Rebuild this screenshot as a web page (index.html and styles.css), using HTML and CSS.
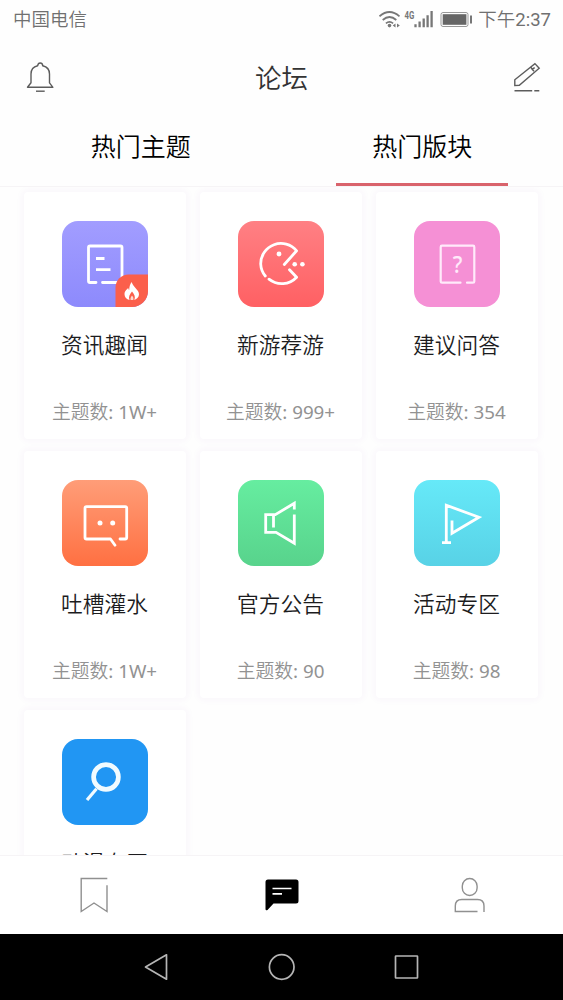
FILE: index.html
```html
<!DOCTYPE html>
<html lang="zh-CN">
<head>
    <meta charset="UTF-8">
    <meta name="viewport" content="width=device-width, initial-scale=1.0">
    <title>论坛</title>
    <link rel="stylesheet" href="styles.css">
</head>
<body>
    <div class="screen">
        <!-- Status bar -->
        <div class="status-bar">
            <span class="carrier">中国电信</span>
            <div class="status-right">
                <svg class="status-icons" width="94" height="20" viewBox="0 0 94 20">
                    <g fill="none" stroke="#777" stroke-width="1.7">
                        <path d="M0.500 6.300Q10.500 -2.300 20.500 6.300"/>
                        <path d="M3.700 10Q10.500 4 17.300 10"/>
                        <path d="M6.900 13.400Q10.500 10.400 14.100 13.400"/>
                    </g>
                    <circle cx="10.500" cy="15.600" r="1.800" fill="#777"/>
                    <path d="M16.500 13.400v4.200l-2.800-2.100zM18 13.400v4.200l2.800-2.100z" fill="#777"/>
                    <text class="net" x="25.500" y="8.500" textLength="9.800" lengthAdjust="spacingAndGlyphs">4G</text>
                    <path d="M36.500 14.200v3M40.600 11.600v5.600M44.700 8.600v8.600M48.600 5.300v11.900M52.600 1v16.200" stroke="#777" stroke-width="2.300"/>
                    <rect x="62" y="2.500" width="27" height="14" rx="2" fill="none" stroke="#999"/>
                    <rect x="63.700" y="4.200" width="23.700" height="10.600" fill="#666"/>
                    <path d="M92 5.500v8" stroke="#777" stroke-width="2"/>
                </svg>
                <span class="time">下午<b>2:37</b></span>
            </div>
        </div>

        <!-- Header -->
        <header class="header">
            <svg width="28" height="32" viewBox="0 0 28 32" fill="none" stroke="#5c5c5c" stroke-width="1.400">
                <path d="M1.500 25.300h25.400l-3.400-4.500V12c0-4.500-3-7.300-6.700-8.200C16.600 2 15.800 1 14.200 1s-2.300 1-2.600 2.800C7.800 4.700 5 7.500 5 12v8.800z" stroke-linejoin="round"/>
                <path d="M10 29.200h8.700"/>
            </svg>
            <h1>论坛</h1>
            <svg width="28" height="32" viewBox="0 0 28 32" fill="none" stroke="#5c5c5c" stroke-width="1.400">
                <path d="M1.800 23.600V17.800L21.900 1.600l4.300 4.700L6.300 23.200zM18.700 6.700l2.300 2.600M17.700 4.900l1.500 2.300 2.500-1.500"/>
                <path d="M1.500 28.700h17.700M21.300 28.700h5"/>
            </svg>
        </header>

        <!-- Tabs -->
        <nav class="tabs">
            <div class="tab"><span>热门主题</span></div>
            <div class="tab active"><span>热门版块</span></div>
        </nav>

        <!-- Boards -->
        <main class="boards">
            <div class="card">
                <div class="tile purple">
                    <svg viewBox="0 0 86 86">
                        <path class="line" d="M34 61.500h-6q-1.500 0-1.500-1.500V26.500q0-1.500 1.500-1.500H58.500q1.500 0 1.500 1.500V61.500H40.500"/>
                        <path class="line flat" d="M34 37.500h8.500M34 48.700h14.500"/>
                        <path d="M53.500 86V66.500a13 13 0 0 1 13-13H86V86z" fill="#fb5f4b"/>
                        <path d="M69.800 61c.8 4.700 7.200 7.800 7.200 12.200 0 3-2 4.700-4.700 5.800 1.300-3.300.3-5.500-2.300-8.500-2.500 3-3.700 5.200-2.500 8.500-3-.9-5-2.800-5-5.800 0-3.500 2.300-4.700 3.700-6.300.1 1 .5 1.700 1 2.100.2-3.200.5-5.800 2.600-8z" fill="#fff"/>
                        <path d="M70 74.500c1 1.300 1.800 2.200 1.300 4.500h-2.700c-.4-2.100.4-3.200 1.400-4.500z" fill="#ffd9cf"/>
                    </svg>
                </div>
                <h2>资讯趣闻</h2>
                <p>主题数<b>: 1W+</b></p>
            </div>
            <div class="card">
                <div class="tile red">
                    <svg viewBox="0 0 86 86">
                        <path class="line" d="M46.300 43.500L58.600 29.800A20.300 20.300 0 0 0 22.700 43A20.300 20.300 0 0 0 27.300 55M31 58.200A20.300 20.300 0 0 0 58.600 56.200L51.500 48.700"/>
                        <g fill="#fff">
                            <circle cx="41" cy="33" r="2.400"/>
                            <circle cx="56.700" cy="43.200" r="2.300"/>
                            <circle cx="64.400" cy="43.200" r="2.300"/>
                        </g>
                    </svg>
                </div>
                <h2>新游荐游</h2>
                <p>主题数<b>: 999+</b></p>
            </div>
            <div class="card">
                <div class="tile pink">
                    <svg viewBox="0 0 86 86">
                        <path class="line thin" d="M46.500 61.700H28q-1.300 0-1.300-1.300V26q0-1.300 1.300-1.300H59q1.300 0 1.300 1.300V60.400q0 1.300-1.300 1.300H53"/>
                        <text class="mark" x="38.700" y="51.700" textLength="9.600" lengthAdjust="spacingAndGlyphs">?</text>
                    </svg>
                </div>
                <h2>建议问答</h2>
                <p>主题数<b>: 354</b></p>
            </div>
            <div class="card">
                <div class="tile orange">
                    <svg viewBox="0 0 86 86">
                        <path class="line" d="M53 65.200L48.500 59H24.500q-1.500 0-1.500-1.500V28.200q0-1.500 1.500-1.500H63.200q1.500 0 1.500 1.500V57.500q0 1.500-1.500 1.500H58"/>
                        <g fill="#fff">
                            <circle cx="38" cy="43" r="2.500"/>
                            <circle cx="50.700" cy="43" r="2.500"/>
                        </g>
                    </svg>
                </div>
                <h2>吐槽灌水</h2>
                <p>主题数<b>: 1W+</b></p>
            </div>
            <div class="card">
                <div class="tile green">
                    <svg viewBox="0 0 86 86">
                        <path class="line miter" d="M56.300 29.500V23.200L37.300 34.700H27.700V52.300H38L56.300 63.300V34.500M35.500 34.700V47.500"/>
                    </svg>
                </div>
                <h2>官方公告</h2>
                <p>主题数<b>: 90</b></p>
            </div>
            <div class="card">
                <div class="tile cyan">
                    <svg viewBox="0 0 86 86">
                        <path class="line miter" d="M32.300 62.500V25.300L65 37.200L38 53.300V40.500M28 62.700h9"/>
                    </svg>
                </div>
                <h2>活动专区</h2>
                <p>主题数<b>: 98</b></p>
            </div>
            <div class="card">
                <div class="tile blue">
                    <svg viewBox="0 0 86 86" fill="none" stroke="#f1fbff">
                        <circle cx="44" cy="38" r="12.400" stroke-width="4.700"/>
                        <path d="M34.500 49.800L25 61" stroke-width="3.200"/>
                    </svg>
                </div>
                <h2>动漫专区</h2>
            </div>
        </main>

        <!-- App navigation -->
        <nav class="bottom-nav">
            <div class="nav-item">
                <svg width="36" height="40" viewBox="0 0 36 40" fill="none" stroke="#909090" stroke-width="1.400">
                    <path d="M31.300 3.500H5.200V36.500L18 28L31 36.500V10.300"/>
                </svg>
            </div>
            <div class="nav-item">
                <svg width="36" height="40" viewBox="0 0 36 40">
                    <path d="M4 4.500H32q2.500 0 2.500 2.500V26q0 2.500-2.500 2.500H9.500L3.500 35q-2 1-2-1V7q0-2.500 2.500-2.500z" fill="#000"/>
                    <path d="M8.500 13.500H27.500M8.500 18.800H18" stroke="#fff" stroke-width="1.700"/>
                </svg>
            </div>
            <div class="nav-item">
                <svg width="36" height="40" viewBox="0 0 36 40" fill="none" stroke="#909090" stroke-width="1.400">
                    <rect x="11.300" y="3.500" width="14.800" height="17" rx="7.400"/>
                    <path d="M26.500 36.500H4.300V31q0-6.500 6.500-6.500H26.500q6.500 0 6.500 6.500V37"/>
                </svg>
            </div>
        </nav>

        <!-- System navigation -->
        <div class="system-nav">
            <svg width="30" height="30" viewBox="0 0 30 30"><path d="M24.500 2.800V27.200L3.500 15z"/></svg>
            <svg width="30" height="30" viewBox="0 0 30 30"><circle cx="14.700" cy="15" r="12.300"/></svg>
            <svg width="30" height="30" viewBox="0 0 30 30"><rect x="3.500" y="4" width="22" height="22" rx="0.500"/></svg>
        </div>
    </div>
</body>
</html>
```
FILE: styles.css
```css
* {
    box-sizing: border-box;
}

body {
    margin: 0;
    font-family: "Noto Sans", "Noto Sans CJK SC", sans-serif;
    font-weight: 350;
    background-color: #fefefe;
    color: #1c1c1e;
}

svg {
    display: block;
}

h1, h2, p {
    margin: 0;
    font-weight: 350;
}

/* digits and latin stay regular next to the lighter Chinese text */
b {
    font-weight: 400;
}

.screen {
    display: flex;
    flex-direction: column;
    width: 563px;
    height: 1000px;
    overflow: hidden;
}

.status-bar {
    display: flex;
    justify-content: space-between;
    align-items: center;
    height: 40px;
    padding: 0 12px 0 13px;
    font-family: Roboto, "Noto Sans CJK SC", sans-serif;
    font-size: 18.5px;
    line-height: 40px;
    color: #707070;
}

.status-right {
    display: flex;
    align-items: center;
    gap: 5px;
}

.net {
    font-family: Roboto, sans-serif;
    font-size: 10px;
    font-weight: 700;
    fill: #777;
}

.header {
    display: flex;
    justify-content: space-between;
    align-items: center;
    height: 75px;
    padding: 0 22px 0 26px;
}

.header h1 {
    margin-right: 4px;
    font-size: 26.5px;
    line-height: 40px;
    color: #333;
}

.tabs {
    display: flex;
    height: 72px;
    flex-shrink: 0;
    border-bottom: 1px solid #f6f4f6;
}

.tab {
    display: flex;
    flex: 1;
    justify-content: center;
    font-size: 25px;
    line-height: 62px;
    color: #000;
}

.tab.active span {
    height: 71px;
    padding: 0 36px;
    border-bottom: 3px solid #d9636c;
}

.boards {
    display: grid;
    grid-template-columns: repeat(3, 162px);
    grid-auto-rows: 247px;
    gap: 12px 14px;
    flex: 1;
    min-height: 0;
    padding: 5px 24px 0 23.5px;
    overflow: hidden;
}

.card {
    display: flex;
    flex-direction: column;
    align-items: center;
    padding-top: 29px;
    background-color: #fff;
    border-radius: 4px;
    box-shadow: 0 0 7px 2px rgba(130, 60, 170, 0.04);
}

.tile {
    width: 86px;
    height: 86px;
    border-radius: 16px;
    overflow: hidden;
}

.purple { background: linear-gradient(#a29dff, #8d8afc); }
.red { background: linear-gradient(#ff8084, #ff6063); }
.pink { background: #f590d5; }
.orange { background: linear-gradient(#ff9d78, #ff7042); }
.green { background: linear-gradient(#66eda0, #58d38c); }
.cyan { background: linear-gradient(#66e9f8, #58d2e6); }
.blue { background: #2196f3; }

.line {
    fill: none;
    stroke: #fff;
    stroke-width: 2.8;
    stroke-linecap: round;
    stroke-linejoin: round;
}

.line.thin {
    stroke-width: 2.2;
    stroke: #ffeafa;
}

.line.flat {
    stroke-linecap: butt;
}

.line.miter {
    stroke-linejoin: miter;
    stroke-linecap: butt;
}

.mark {
    font-family: "Noto Sans", sans-serif;
    font-size: 24px;
    font-weight: 500;
    fill: #ffeafa;
}

.card h2 {
    margin-top: 22px;
    font-size: 21.7px;
    line-height: 32px;
}

.card p {
    margin-top: 37px;
    font-size: 18.8px;
    line-height: 28px;
    color: #929292;
}

.bottom-nav {
    display: flex;
    height: 79px;
    flex-shrink: 0;
    background-color: #fff;
    border-top: 1px solid #f6f4f6;
}

.nav-item {
    display: flex;
    flex: 1;
    justify-content: center;
    padding-top: 19px;
}

.system-nav {
    display: flex;
    justify-content: center;
    align-items: center;
    gap: 95px;
    height: 66px;
    flex-shrink: 0;
    background-color: #000;
}

.system-nav svg {
    fill: none;
    stroke: #b5b5b5;
    stroke-width: 1.7;
    stroke-linejoin: round;
}
```
